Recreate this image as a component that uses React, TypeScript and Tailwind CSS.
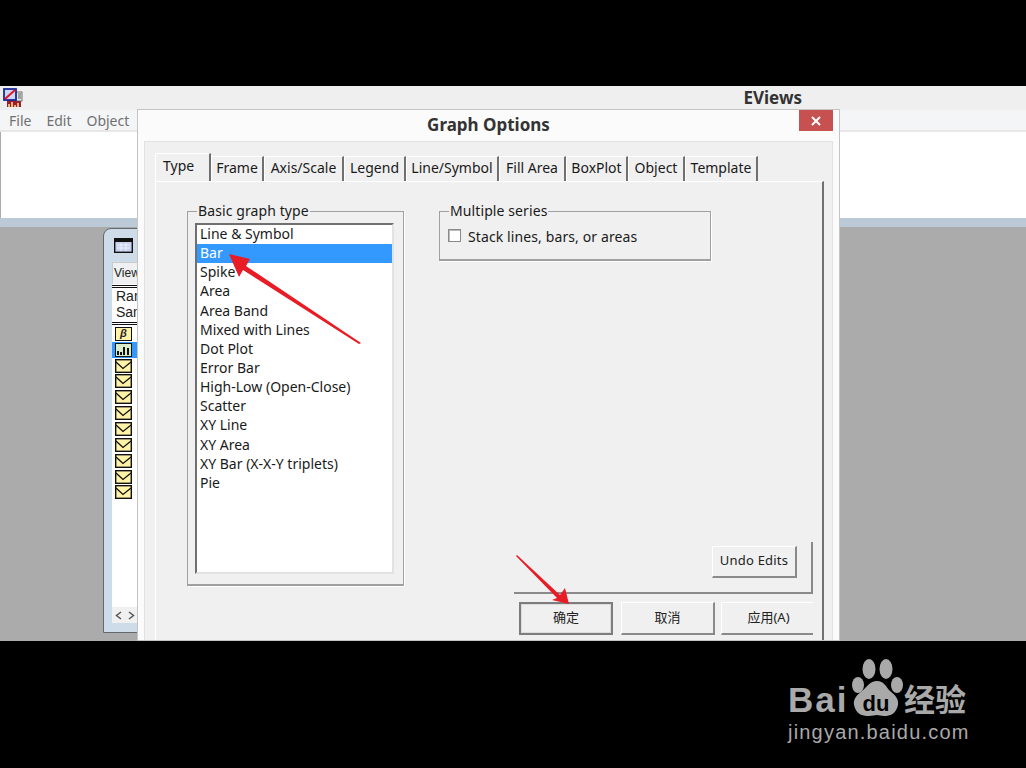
const items = ["Line & Symbol","Bar","Spike","Area","Area Band","Mixed with Lines","Dot Plot","Error Bar","High-Low (Open-Close)","Scatter","XY Line","XY Area","XY Bar (X-X-Y triplets)","Pie"];
const tabs: [string, string][] = [["Frame","w-[53px]"],["Axis/Scale","w-[80px]"],["Legend","w-[62px]"],["Line/Symbol","w-[93px]"],["Fill Area","w-[67px]"],["BoxPlot","w-[62px]"],["Object","w-[57px]"],["Template","w-[73px]"]];

function AppIcon() {
  return (
    <svg width="20" height="20" viewBox="0 0 20 20" className="ml-[3px]">
      <rect x="4" y="12" width="14" height="7" fill="#a01c28" />
      <path d="M6 19v-3M9 19v-5M12 19v-2M15 19v-4" stroke="#f5e9a0" strokeWidth="1.5" />
      <rect x="13" y="4" width="6" height="9" fill="#e8e8e8" stroke="#555" strokeWidth="0.8" />
      <path d="M15 6h3M15 8h3M15 10h3" stroke="#333" strokeWidth="0.8" />
      <rect x="1" y="1" width="12" height="11" fill="#c8d8ff" stroke="#1a2a9a" strokeWidth="1.8" />
      <path d="M2 11 12 2" stroke="#e8141c" strokeWidth="2" />
    </svg>
  );
}
function SeriesIcon() {
  return (
    <svg width="17" height="14" viewBox="0 0 17 14" className="block">
      <rect x="0.7" y="0.7" width="15.6" height="12.6" fill="#fff3a8" stroke="#111" strokeWidth="1.4" />
      <path d="M1 3 8 9.5 16 3" fill="none" stroke="#111" strokeWidth="1.3" />
    </svg>
  );
}
function GroupLabel({ children }: { children: string }) {
  return <span className="absolute left-[9px] top-[-9px] bg-[#f0f0f0] px-px text-[14px] leading-[16px] tracking-[0.1px] text-[#1a1a1a]">{children}</span>;
}
function DlgButton({ label, cls }: { label: string; cls: string }) {
  return (
    <div className={`flex h-[33px] shrink-0 items-center justify-center bg-[#f0f0f0] pb-px text-[13px] text-[#222] ${cls}`}>{label}</div>
  );
}

function Dialog() {
  return (
    <div className="absolute left-[137px] top-[23px] z-10 flex h-[532px] w-[703px] flex-col overflow-hidden border border-[#c4c4c4] bg-[#fbfbfb]">
      <div className="relative flex h-[31px] shrink-0 items-center justify-center pb-[2px] text-[17px] font-bold text-[#333]">
        Graph Options
        <div className="absolute right-[6px] top-0 flex h-[21px] w-[34px] items-center justify-center bg-[#c75050]">
          <svg width="10" height="10" viewBox="0 0 10 10"><path d="M1 1l8 8M9 1 1 9" stroke="#fff" strokeWidth="2" /></svg>
        </div>
      </div>
      <div className="mx-[6px] flex flex-1 flex-col border-l border-r border-t border-[#e2e2e2] bg-[#f0f0f0] pl-[10px] pr-[8px] pt-[11px]">
        <div className="flex h-[28px] shrink-0 items-end text-[14px] text-[#1a1a1a]">
          <div className="relative z-10 flex h-[28px] w-[56px] items-start rounded-tl-[2px] border-l border-r-2 border-t border-white border-r-[#707070] bg-[#f0f0f0] pl-[7px] pt-px">Type</div>
          {tabs.map(([t, w]) => (
            <div key={t} className={`flex h-[25px] ${w} shrink-0 items-center justify-center border-l border-r-2 border-t border-white border-r-[#707070] bg-[#f0f0f0] pb-[3px]`}>{t}</div>
          ))}
        </div>
        <div className="flex flex-1 gap-[35px] border-l border-r-2 border-t border-white border-r-[#707070] pl-[31px] pt-[29px]">
          <div className="relative h-[375px] w-[217px] shrink-0 border border-b-2 border-[#a0a0a0] pb-[11px] pl-[7px] pr-[9px] pt-[11px] shadow-[1px_1px_0_#fff]">
            <GroupLabel>Basic graph type</GroupLabel>
            <div className="h-[351px] border-2 border-b-[#e2e2e2] border-l-[#707070] border-r-[#e2e2e2] border-t-[#707070] bg-white text-[14px] text-[#1a1a1a]">
              {items.map((it) => (
                <div key={it} className={`h-[19.15px] pl-[3px] leading-[17px] ${it === "Bar" ? "bg-[#3399ff] text-white" : ""}`}>{it}</div>
              ))}
            </div>
          </div>
          <div className="flex w-[374px] shrink-0 flex-col">
            <div className="relative flex h-[50px] w-[272px] items-center gap-[6px] border border-b-2 border-[#a0a0a0] pl-[9px] pt-px text-[14px] tracking-[0.11px] text-[#1a1a1a] shadow-[1px_1px_0_#fff]">
              <GroupLabel>Multiple series</GroupLabel>
              <span className="h-[13px] w-[13px] -translate-x-px -translate-y-px border border-[#8a8a8a] bg-white shadow-[inset_1px_1px_0_#bbb]" />
              Stack lines, bars, or areas
            </div>
            <div className="ml-[75px] mt-[281px] flex h-[52px] w-[299px] shrink-0 items-start justify-end border-b-2 border-r-2 border-[#8a8a8a] pr-[14px] pt-[4px]">
              <div className="flex h-[32px] w-[85px] items-center justify-center border-b-2 border-l border-r-2 border-t border-b-[#8a8a8a] border-l-white border-r-[#8a8a8a] border-t-white pb-px text-[13px] tracking-[0.2px] text-[#222]">Undo Edits</div>
            </div>
            <div className="mt-[8px] flex w-[374px] gap-[8px] overflow-hidden pl-[80px]">
              <DlgButton label="确定" cls="w-[94px] border-2 border-[#7d7d7d] outline outline-1 -outline-offset-3 outline-[#dcdcdc]" />
              <DlgButton label="取消" cls="w-[94px] border-b-2 border-l border-r-2 border-t border-b-[#8a8a8a] border-l-white border-r-[#8a8a8a] border-t-white" />
              <DlgButton label="应用(A)" cls="w-[94px] -ml-[2px] border-b-2 border-l border-t border-b-[#8a8a8a] border-l-white border-t-white" />
            </div>
          </div>
        </div>
      </div>
    </div>
  );
}

function ChildWindow() {
  return (
    <div className="absolute left-[103px] top-[142px] flex h-[405px] w-[60px] flex-col rounded-tl-[8px] border border-[#5f6a73] bg-[#cddce8] pb-[9px] pl-[8px]">
      <div className="flex h-[33px] shrink-0 items-center pl-[2px]">
        <svg width="19" height="15" viewBox="0 0 19 15">
          <rect x="0.7" y="0.7" width="17.6" height="13.6" fill="#c8d0f0" stroke="#111" strokeWidth="1.4" />
          <rect x="1" y="1" width="17" height="3" fill="#111" />
          <path d="M3 7h13M3 10h13M7 5v8M12 5v8" stroke="#eef2ff" />
        </svg>
      </div>
      <div className="flex flex-1 flex-col bg-white font-['Liberation_Sans',sans-serif] text-[14px] text-[#222]">
        <div className="h-[22px] shrink-0 bg-[#eef0f2] pl-[2px] text-[12px] leading-[22px] shadow-[inset_1px_1px_0_#ccc]">View</div>
        <div className="mt-px h-[3px] shrink-0 border-y border-[#111]" />
        <div className="h-[16px] pl-[4px] leading-[16px]">Range</div>
        <div className="h-[16px] pl-[4px] leading-[16px]">Sample</div>
        <div className="mt-[2px] h-[3px] shrink-0 border-y border-[#111]" />
        <div className="mt-px flex flex-col pl-[3px]">
          <div className="flex h-[15.85px] items-center">
            <div className="flex h-[14px] w-[17px] items-center justify-center border border-[#111] bg-[#fff3a8] text-[11px] font-bold italic leading-none">β</div>
          </div>
          <div className="-ml-[3px] flex h-[15.85px] items-center bg-[#3399ff] pl-[3px]">
            <svg width="17" height="14" viewBox="0 0 17 14">
              <rect x="0.5" y="0.5" width="16" height="13" fill="#d8ecc8" stroke="#111" />
              <path d="M3 12V8M6 12V9M9 12V4M13 12V5" stroke="#111" strokeWidth="2" />
            </svg>
          </div>
          {Array.from({ length: 9 }).map((_, i) => (
            <div key={i} className="flex h-[15.85px] items-center"><SeriesIcon /></div>
          ))}
        </div>
        <div className="mt-auto flex h-[16px] items-center gap-[6px] bg-[#f0f0f0] pl-[3px]">
          <svg width="7" height="9" viewBox="0 0 7 9"><path d="M6 1 1.5 4.5 6 8" fill="none" stroke="#555" strokeWidth="1.5" /></svg>
          <svg width="7" height="9" viewBox="0 0 7 9"><path d="M1 1 5.5 4.5 1 8" fill="none" stroke="#555" strokeWidth="1.5" /></svg>
        </div>
      </div>
    </div>
  );
}

function Logo() {
  return (
    <div className="flex h-[127px] justify-end bg-black pr-[55px] pt-[17px] font-['Liberation_Sans',sans-serif] text-[#a9a9a9]">
      <div className="flex w-[183px] flex-col">
        <div className="flex h-[60px] items-end">
          <span className="mb-[2px] w-[62px] whitespace-nowrap text-[35px] font-bold leading-[32px] tracking-[2px]">Bai</span>
          <svg width="54" height="60" viewBox="0 0 54 60" className="shrink-0">
            <ellipse cx="8" cy="27" rx="6" ry="8" fill="#a9a9a9" />
            <ellipse cx="19" cy="11" rx="6.5" ry="10" fill="#a9a9a9" />
            <ellipse cx="36" cy="11" rx="6.5" ry="10" fill="#a9a9a9" />
            <ellipse cx="47" cy="27" rx="6" ry="8" fill="#a9a9a9" />
            <path d="M27 23c7 0 9 6 13 10 5 4 9 8 8 14-2 9-8 11-14 11-3 0-5-1-7-1s-5 1-8 1c-7 0-13-2-15-11-1-6 3-10 8-14 5-4 8-10 15-10z" fill="#a9a9a9" />
            <text x="26" y="53" textAnchor="middle" fontSize="22" fontWeight="700" fontFamily="Liberation Sans" fill="#000">du</text>
          </svg>
          <span className="mb-[4px] whitespace-nowrap font-['Noto_Sans_CJK_SC',sans-serif] text-[31px] font-bold leading-[32px]">经验</span>
        </div>
        <div className="mt-[2px] whitespace-nowrap text-[20px] leading-[24px] tracking-[1.2px]">jingyan.baidu.com</div>
      </div>
    </div>
  );
}

export default function App() {
  return (
    <div className="relative h-[768px] w-[1026px] overflow-hidden bg-black font-['Noto_Sans','Noto_Sans_CJK_SC',sans-serif]">
      <div className="h-[86px]" />
      <div className="relative flex h-[555px] flex-col overflow-hidden bg-[#ababab]">
        <div className="flex h-[24px] shrink-0 items-center justify-between bg-[#efefef] pr-[224px]">
          <AppIcon />
          <span className="text-[17px] font-bold text-[#333]">EViews</span>
        </div>
        <div className="flex h-[22px] shrink-0 items-center gap-[15px] border-b-2 border-[#e8e8e8] bg-[#f4f5f7] pl-[9px] pt-px text-[14px] text-[#707070]">
          <span>File</span><span>Edit</span><span>Object</span>
        </div>
        <div className="ml-px h-[86px] shrink-0 bg-white" />
        <div className="h-[9px] shrink-0 bg-[#bccad8]" />
        <ChildWindow />
        <Dialog />
      </div>
      <Logo />
      <svg className="pointer-events-none absolute left-0 top-0 z-20" width="1026" height="768">
        <polygon points="229,254 250,259 246,266 361,343 359,344 243,270 239,277" fill="#e81c24" />
        <polygon points="516,556 517,555 560,595 565,588 569,604 552,600 557,598" fill="#e81c24" />
      </svg>
    </div>
  );
}
